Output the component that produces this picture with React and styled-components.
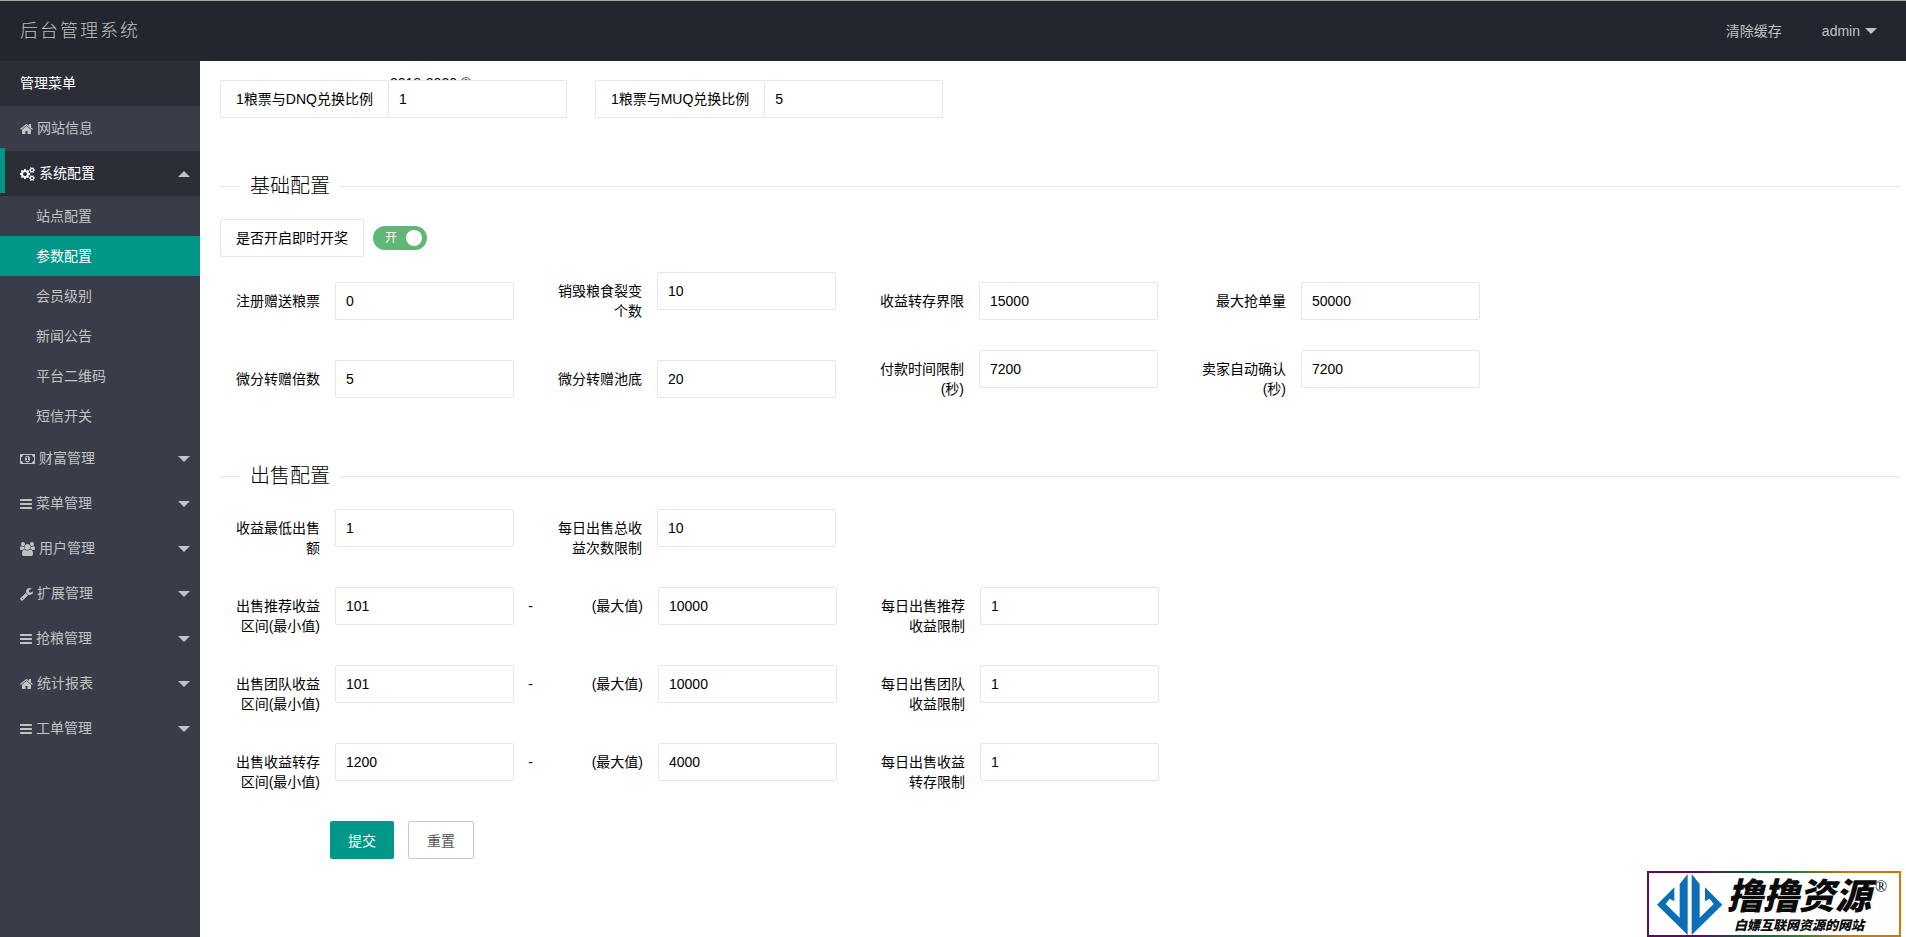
import React, { useId, useState } from "react"
import styled, { createGlobalStyle, css } from 'styled-components';

const GlobalStyle = createGlobalStyle`
	* {
		box-sizing: border-box;
	}
	body {
		margin: 0;
		background: #fff;
		color: #000;
		font: 14px/20px "Liberation Sans", "Noto Sans CJK SC", sans-serif;
	}
	input, button {
		font-family: inherit;
	}
	a {
		color: inherit;
		text-decoration: none;
	}
	ul {
		margin: 0;
		padding: 0;
		list-style: none;
	}
`;

const icons = {
	home: {
		viewBox: '64 0 1664 1792',
		width: 13,
		d: 'M1472 992v480q0 26-19 45t-45 19h-384v-384h-256v384h-384q-26 0-45-19t-19-45v-480q0-1 .5-3t.5-3l575-474 575 474q1 2 1 6zm223-69l-62 74q-8 9-21 11h-3q-13 0-21-7l-692-577-692 577q-12 8-24 7-13-2-21-11l-62-74q-8-10-7-23.5t11-21.5l719-599q32-26 76-26t76 26l244 204v-195q0-14 9-23t23-9h192q14 0 23 9t9 23v408l219 182q10 8 11 21.5t-7 23.5z',
	},
	bars: {
		viewBox: '128 0 1536 1792',
		width: 12,
		d: 'M1664 1344v128q0 26-19 45t-45 19h-1408q-26 0-45-19t-19-45v-128q0-26 19-45t45-19h1408q26 0 45 19t19 45zm0-512v128q0 26-19 45t-45 19h-1408q-26 0-45-19t-19-45v-128q0-26 19-45t45-19h1408q26 0 45 19t19 45zm0-512v128q0 26-19 45t-45 19h-1408q-26 0-45-19t-19-45v-128q0-26 19-45t45-19h1408q26 0 45 19t19 45z',
	},
	wrench: {
		viewBox: '64 0 1664 1792',
		width: 13,
		d: 'M448 1472q0-26-19-45t-45-19-45 19-19 45 19 45 45 19 45-19 19-45zm644-420l-682 682q-37 37-90 37-52 0-91-37l-106-108q-38-36-38-90 0-53 38-91l681-681q39 98 114.5 173.5t173.5 114.5zm634-435q0 39-23 106-47 134-164.5 217.5t-258.5 83.5q-185 0-316.5-131.5t-131.5-316.5 131.5-316.5 316.5-131.5q58 0 121.5 16.5t107.5 46.5q16 11 16 28t-16 28l-293 169v224l193 107q5-3 79-48.5t135.5-81 70.5-35.5q15 0 23.5 10t8.5 25z',
	},
	money: {
		viewBox: '0 0 1920 1792',
		width: 15,
		d: 'M768 1152h384v-96h-128v-448h-114l-148 137 77 80q42-37 55-57h2v288h-128v96zm512-256q0 70-21 142t-59.5 134-101.5 101-138 39-138-39-101.5-101-59.5-134-21-142 21-142 59.5-134 101.5-101 138-39 138 39 101.5 101 59.5 134 21 142zm512 256v-512q-106 0-181-75t-75-181h-1152q0 106-75 181t-181 75v512q106 0 181 75t75 181h1152q0-106 75-181t181-75zm128-832v1152q0 26-19 45t-45 19h-1792q-26 0-45-19t-19-45v-1152q0-26 19-45t45-19h1792q26 0 45 19t19 45z',
	},
	cogs: {
		viewBox: '0 0 1920 1792',
		width: 15,
		d: 'M896 896q0-106-75-181t-181-75-181 75-75 181 75 181 181 75 181-75 75-181zm768 512q0-52-38-90t-90-38-90 38-38 90q0 53 37.5 90.5t90.5 37.5 90.5-37.5 37.5-90.5zm0-1024q0-52-38-90t-90-38-90 38-38 90q0 53 37.5 90.5t90.5 37.5 90.5-37.5 37.5-90.5zm-384 421v185q0 10-7 19.5t-16 10.5l-155 24q-11 35-32 76 34 48 90 115 7 11 7 20 0 12-7 19-23 30-82.5 89.5t-78.5 59.5q-11 0-21-7l-115-90q-37 19-77 31-11 108-23 155-7 24-30 24h-186q-11 0-20-7.5t-10-17.5l-23-153q-34-10-75-31l-118 89q-7 7-20 7-11 0-21-8-144-133-144-160 0-9 7-19 10-14 41-53t47-61q-23-44-35-82l-152-24q-10-1-17-9.5t-7-19.5v-185q0-10 7-19.5t16-10.5l155-24q11-35 32-76-34-48-90-115-7-11-7-20 0-12 7-20 22-30 82-89t79-59q11 0 21 7l115 90q34-18 77-32 11-108 23-154 7-24 30-24h186q11 0 20 7.5t10 17.5l23 153q34 10 75 31l118-89q8-7 20-7 11 0 21 8 144 133 144 160 0 8-7 19-12 16-42 54t-45 60q23 48 34 82l152 23q10 2 17 10.5t7 19.5zm640 533v140q0 16-149 31-12 27-30 52 51 113 51 138 0 4-4 7-122 71-124 71-8 0-46-47t-52-68q-20 2-30 2t-30-2q-14 21-52 68t-46 47q-2 0-124-71-4-3-4-7 0-25 51-138-18-25-30-52-149-15-149-31v-140q0-16 149-31 13-29 30-52-51-113-51-138 0-4 4-7 4-2 35-20t59-34 30-16q8 0 46 46.5t52 67.5q20-2 30-2t30 2q51-71 92-112l6-2q4 0 124 70 4 3 4 7 0 25-51 138 17 23 30 52 149 15 149 31zm0-1024v140q0 16-149 31-12 27-30 52 51 113 51 138 0 4-4 7-122 71-124 71-8 0-46-47t-52-68q-20 2-30 2t-30-2q-14 21-52 68t-46 47q-2 0-124-71-4-3-4-7 0-25 51-138-18-25-30-52-149-15-149-31v-140q0-16 149-31 13-29 30-52-51-113-51-138 0-4 4-7 4-2 35-20t59-34 30-16q8 0 46 46.5t52 67.5q20-2 30-2t30 2q51-71 92-112l6-2q4 0 124 70 4 3 4 7 0 25-51 138 17 23 30 52 149 15 149 31z',
	},
	users: {
		viewBox: '0 0 1920 1792',
		width: 15,
		d: 'M593 896q-162 5-265 128h-134q-82 0-138-40.5t-56-118.5q0-353 124-353 6 0 43.5 21t97.5 42.5 119 21.5q67 0 133-23-5 37-5 66 0 139 81 256zm1071 637q0 120-73 189.5t-194 69.5h-874q-121 0-194-69.5t-73-189.5q0-53 3.5-103.5t14-109 26.5-108.5 43-97.5 62-81 85.5-53.5 111.5-20q10 0 43 21.5t73 48 107 48 135 21.5 135-21.5 107-48 73-48 43-21.5q61 0 111.5 20t85.5 53.5 62 81 43 97.5 26.5 108.5 14 109 3.5 103.5zm-1024-1277q0 106-75 181t-181 75-181-75-75-181 75-181 181-75 181 75 75 181zm704 384q0 159-112.5 271.5t-271.5 112.5-271.5-112.5-112.5-271.5 112.5-271.5 271.5-112.5 271.5 112.5 112.5 271.5zm576 225q0 78-56 118.5t-138 40.5h-134q-103-123-265-128 81-117 81-256 0-29-5-66 66 23 133 23 59 0 119-21.5t97.5-42.5 43.5-21q124 0 124 353zm-128-609q0 106-75 181t-181 75-181-75-75-181 75-181 181-75 181 75 75 181z',
	},
};

const menu = [
	{ name: '网站信息', icon: 'home' },
	{
		name: '系统配置',
		icon: 'cogs',
		children: ['站点配置', '参数配置', '会员级别', '新闻公告', '平台二维码', '短信开关'],
	},
	{ name: '财富管理', icon: 'money', children: [] },
	{ name: '菜单管理', icon: 'bars', children: [] },
	{ name: '用户管理', icon: 'users', children: [] },
	{ name: '扩展管理', icon: 'wrench', children: [] },
	{ name: '抢粮管理', icon: 'bars', children: [] },
	{ name: '统计报表', icon: 'home', children: [] },
	{ name: '工单管理', icon: 'bars', children: [] },
];

const basicRows = [
	[
		{ label: '注册赠送粮票', value: '0' },
		{ label: '销毁粮食裂变个数', value: '10' },
		{ label: '收益转存界限', value: '15000' },
		{ label: '最大抢单量', value: '50000' },
	],
	[
		{ label: '微分转赠倍数', value: '5' },
		{ label: '微分转赠池底', value: '20' },
		{ label: '付款时间限制(秒)', value: '7200' },
		{ label: '卖家自动确认(秒)', value: '7200' },
	],
];

const sellRanges = [
	{ label: '出售推荐收益区间(最小值)', min: '101', max: '10000', limitLabel: '每日出售推荐收益限制', limit: '1' },
	{ label: '出售团队收益区间(最小值)', min: '101', max: '10000', limitLabel: '每日出售团队收益限制', limit: '1' },
	{ label: '出售收益转存区间(最小值)', min: '1200', max: '4000', limitLabel: '每日出售收益转存限制', limit: '1' },
];

const Shell = styled.div`
	display: flex;
	flex-direction: column;
	min-height: 100vh;
`;
const Caret = styled.span`
	border: 6px solid transparent;
	${({ $up }) => $up ? css`
		border-top: 0;
		border-bottom-color: #c2c2c2;
	` : css`
		border-bottom: 0;
		border-top-color: #c2c2c2;
	`}
`;

const Header = () => (
	<Header.Wrapper>
		<Header.Logo>后台管理系统</Header.Logo>
		<Header.Navigation>
			<a href="#cache">清除缓存</a>
			<Header.User href="#user">admin <Caret /></Header.User>
		</Header.Navigation>
	</Header.Wrapper>
);
Header.Wrapper = styled.header`
	display: flex;
	align-items: center;
	justify-content: space-between;
	height: 61px;
	padding: 0 29px 0 20px;
	border-top: 1px solid #a9a59b;
	background: #23262e;
	color: #c2c2c2;
`;
Header.Logo = styled.div`
	font-size: 18px;
	font-weight: 300;
	letter-spacing: 2px;
`;
Header.Navigation = styled.nav`
	display: flex;
	gap: 40px;
`;
Header.User = styled.a`
	display: flex;
	align-items: center;
	gap: 5px;
`;

const Icon = ({ name }) => (
	<svg width={icons[name].width} height="14" viewBox={icons[name].viewBox} fill="currentColor" aria-hidden="true">
		<path d={icons[name].d} />
	</svg>
);

const Sidebar = () => {
	const [open, setOpen] = useState('系统配置');
	const [current, setCurrent] = useState('参数配置');

	return (
		<Sidebar.Wrapper>
			<Sidebar.Title>管理菜单</Sidebar.Title>
			<ul>
				{menu.map(item => {
					const isOpen = open === item.name;
					return (
						<li key={item.name}>
							<Sidebar.Item
								href="#menu"
								$open={isOpen}
								onClick={() => item.children && setOpen(isOpen ? '' : item.name)}
							>
								<Icon name={item.icon} />
								<Sidebar.Name>{item.name}</Sidebar.Name>
								{item.children && <Caret $up={isOpen} />}
							</Sidebar.Item>
							{isOpen && (
								<ul>
									{item.children.map(child => (
										<li key={child}>
											<Sidebar.Child
												href="#page"
												$active={child === current}
												onClick={() => setCurrent(child)}
											>
												{child}
											</Sidebar.Child>
										</li>
									))}
								</ul>
							)}
						</li>
					);
				})}
			</ul>
		</Sidebar.Wrapper>
	);
}
Sidebar.Wrapper = styled.nav`
	flex: 0 0 200px;
	background: #393d49;
	color: #c2c2c2;
`;
Sidebar.Title = styled.div`
	padding: 0 20px;
	line-height: 45px;
	background: #2b2e37;
	color: #fff;
`;
Sidebar.Item = styled.a`
	position: relative;
	display: flex;
	align-items: center;
	gap: 4px;
	height: 45px;
	padding: 0 10px 0 20px;
	${({ $open }) => $open && css`
		background: #2b2e37;
		color: #fff;
		&::before {
			content: '';
			position: absolute;
			left: 0;
			top: -3px;
			width: 5px;
			height: 45px;
			background: #009688;
		}
	`}
`;
Sidebar.Name = styled.span`
	flex: 1;
	line-height: 45px;
`;
Sidebar.Child = styled.a`
	display: block;
	padding-left: 36px;
	line-height: 40px;
	${({ $active }) => $active && css`
		background: #009688;
		color: #fff;
	`}
`;

const Input = styled.input`
	width: ${({ $joined }) => $joined ? 178 : 179}px;
	height: 38px;
	padding: 0 10px;
	border: 1px solid #e6e6e6;
	border-left-width: ${({ $joined }) => $joined ? 0 : 1}px;
	border-radius: 2px;
	background: #fff;
	color: #000;
	font-size: 14px;
	outline: none;
	&:focus {
		border-color: #d2d2d2;
	}
`;

const Field = ({ label, value }) => {
	const id = useId();
	return (
		<Field.Wrapper>
			<Field.Label htmlFor={id}>{label}</Field.Label>
			<Input id={id} defaultValue={value} />
		</Field.Wrapper>
	);
}
Field.Wrapper = styled.div`
	display: flex;
	align-items: flex-start;
`;
Field.Label = styled.label`
	width: 115px;
	padding: 9px 15px;
	text-align: right;
`;

const BoxLabel = styled.label`
	padding: 8px 15px;
	border: 1px solid #e6e6e6;
	border-radius: 2px 0 0 2px;
	background: #fff;
`;

const JoinedField = ({ label, value }) => {
	const id = useId();
	return (
		<Field.Wrapper>
			<BoxLabel htmlFor={id}>{label}</BoxLabel>
			<Input id={id} defaultValue={value} $joined />
		</Field.Wrapper>
	);
}

const Row = styled.div`
	display: flex;
	align-items: ${({ $align }) => $align || 'center'};
	gap: 28px;
	& + & {
		margin-top: 20px;
	}
`;
const Range = styled.div`
	display: flex;
`;
const Dash = styled.span`
	width: 29px;
	padding: 9px 10px;
	text-align: right;
`;

const Section = styled.fieldset`
	min-width: 0;
	margin: 53px 0 0;
	padding: 0;
	border: 0 solid #e6e6e6;
	border-top-width: 1px;
`;
const Legend = styled.legend`
	margin-left: 20px;
	padding: 0 10px;
	font-size: 20px;
	font-weight: 300;
	line-height: 30px;
`;
const Fields = styled.div`
	padding-top: 18px;
`;

const Toggle = ({ label }) => {
	const [on, setOn] = useState(true);
	const id = useId();
	return (
		<Toggle.Wrapper>
			<BoxLabel htmlFor={id}>{label}</BoxLabel>
			<Toggle.Track $on={on}>
				<Toggle.Input id={id} type="checkbox" checked={on} onChange={e => setOn(e.target.checked)} />
				<span>{on ? '开' : '关'}</span>
				<Toggle.Knob />
			</Toggle.Track>
		</Toggle.Wrapper>
	);
}
Toggle.Wrapper = styled.div`
	display: flex;
	align-items: center;
	gap: 9px;
	margin-bottom: 15px;
`;
Toggle.Track = styled.label`
	position: relative;
	display: flex;
	flex-direction: ${({ $on }) => $on ? 'row' : 'row-reverse'};
	align-items: center;
	justify-content: space-between;
	width: 54px;
	height: 24px;
	padding: 0 5px 0 12px;
	border-radius: 20px;
	background: ${({ $on }) => $on ? '#5fb878' : '#d2d2d2'};
	color: #fff;
	font-size: 12px;
	cursor: pointer;
`;
Toggle.Input = styled.input`
	position: absolute;
	inset: 0;
	margin: 0;
	opacity: 0;
`;
Toggle.Knob = styled.span`
	width: 16px;
	height: 16px;
	border-radius: 50%;
	background: #fff;
`;

const Actions = styled.div`
	display: flex;
	gap: 14px;
	margin: 20px 0 0 110px;
`;
const Button = styled.button`
	height: 38px;
	padding: 0 18px;
	border: 0;
	border-radius: 2px;
	background: #009688;
	color: #fff;
	font-size: 14px;
	cursor: pointer;
`;
const ResetButton = styled(Button)`
	border: 1px solid #c9c9c9;
	background: #fff;
	color: #555;
`;

const Main = styled.main`
	position: relative;
	z-index: 0;
	flex: 1;
	min-width: 0;
	padding: 19px 6px 20px 20px;
`;
// sits under the first row, only its top edge shows
const Copyright = styled.div`
	position: absolute;
	left: 190px;
	top: 12px;
	z-index: -1;
`;
const Body = styled.div`
	display: flex;
	flex: 1;
`;

const Badge = () => (
	<Badge.Wrapper>
		<svg width="66" height="61" viewBox="40 18 198 183" fill="#0b6fb8" aria-hidden="true">
			<path d="M40 110L92 58V100L78 92L66 108L108 149V48L132 18V201Z" />
			<path d="M236 110L184 58V100L198 92L210 108L168 149V48L144 18V201Z" />
		</svg>
		<Badge.Text>
			<Badge.Name>撸撸资源</Badge.Name>
			<Badge.Slogan>白嫖互联网资源的网站</Badge.Slogan>
		</Badge.Text>
		<Badge.Mark>®</Badge.Mark>
	</Badge.Wrapper>
);
Badge.Wrapper = styled.div`
	position: fixed;
	right: 5px;
	bottom: 0;
	z-index: 1;
	display: flex;
	align-items: flex-start;
	width: 254px;
	height: 66px;
	padding: 1px 8px;
	border: 2px solid;
	border-image: linear-gradient(90deg, #5d0a63 20%, #0d5b3c 40%, #2c7a3c 60%, #c97a08 80%) 1;
	background: #fff;
`;
Badge.Text = styled.div`
	display: flex;
	flex-direction: column;
	align-items: center;
	margin-left: 4px;
	color: #0a0a0a;
	font-weight: 900;
	font-style: italic;
	white-space: nowrap;
`;
Badge.Name = styled.span`
	font-size: 36px;
	line-height: 46px;
`;
Badge.Slogan = styled.span`
	font-size: 13px;
	line-height: 12px;
`;
Badge.Mark = styled.span`
	margin: 3px 0 0 4px;
	font: 16px/20px "Liberation Serif", serif;
`;

const App = () => (
	<Shell>
		<GlobalStyle />
		<Header />
		<Body>
			<Sidebar />
			<Main>
				<Copyright>2018-2020 ©</Copyright>
				<form onSubmit={e => e.preventDefault()}>
					<Row>
						<JoinedField label="1粮票与DNQ兑换比例" value="1" />
						<JoinedField label="1粮票与MUQ兑换比例" value="5" />
					</Row>
					<Section>
						<Legend>基础配置</Legend>
						<Fields>
							<Toggle label="是否开启即时开奖" />
							{basicRows.map((row, i) => (
								<Row key={i}>
									{row.map(field => <Field key={field.label} {...field} />)}
								</Row>
							))}
						</Fields>
					</Section>
					<Section>
						<Legend>出售配置</Legend>
						<Fields>
							<Row $align="flex-start">
								<Field label="收益最低出售额" value="1" />
								<Field label="每日出售总收益次数限制" value="10" />
							</Row>
							{sellRanges.map(range => (
								<Row key={range.label} $align="flex-start">
									<Range>
										<Field label={range.label} value={range.min} />
										<Dash>-</Dash>
										<Field label="(最大值)" value={range.max} />
									</Range>
									<Field label={range.limitLabel} value={range.limit} />
								</Row>
							))}
						</Fields>
					</Section>
					<Actions>
						<Button type="submit">提交</Button>
						<ResetButton type="reset">重置</ResetButton>
					</Actions>
				</form>
			</Main>
		</Body>
		<Badge />
	</Shell>
);

export default App;
